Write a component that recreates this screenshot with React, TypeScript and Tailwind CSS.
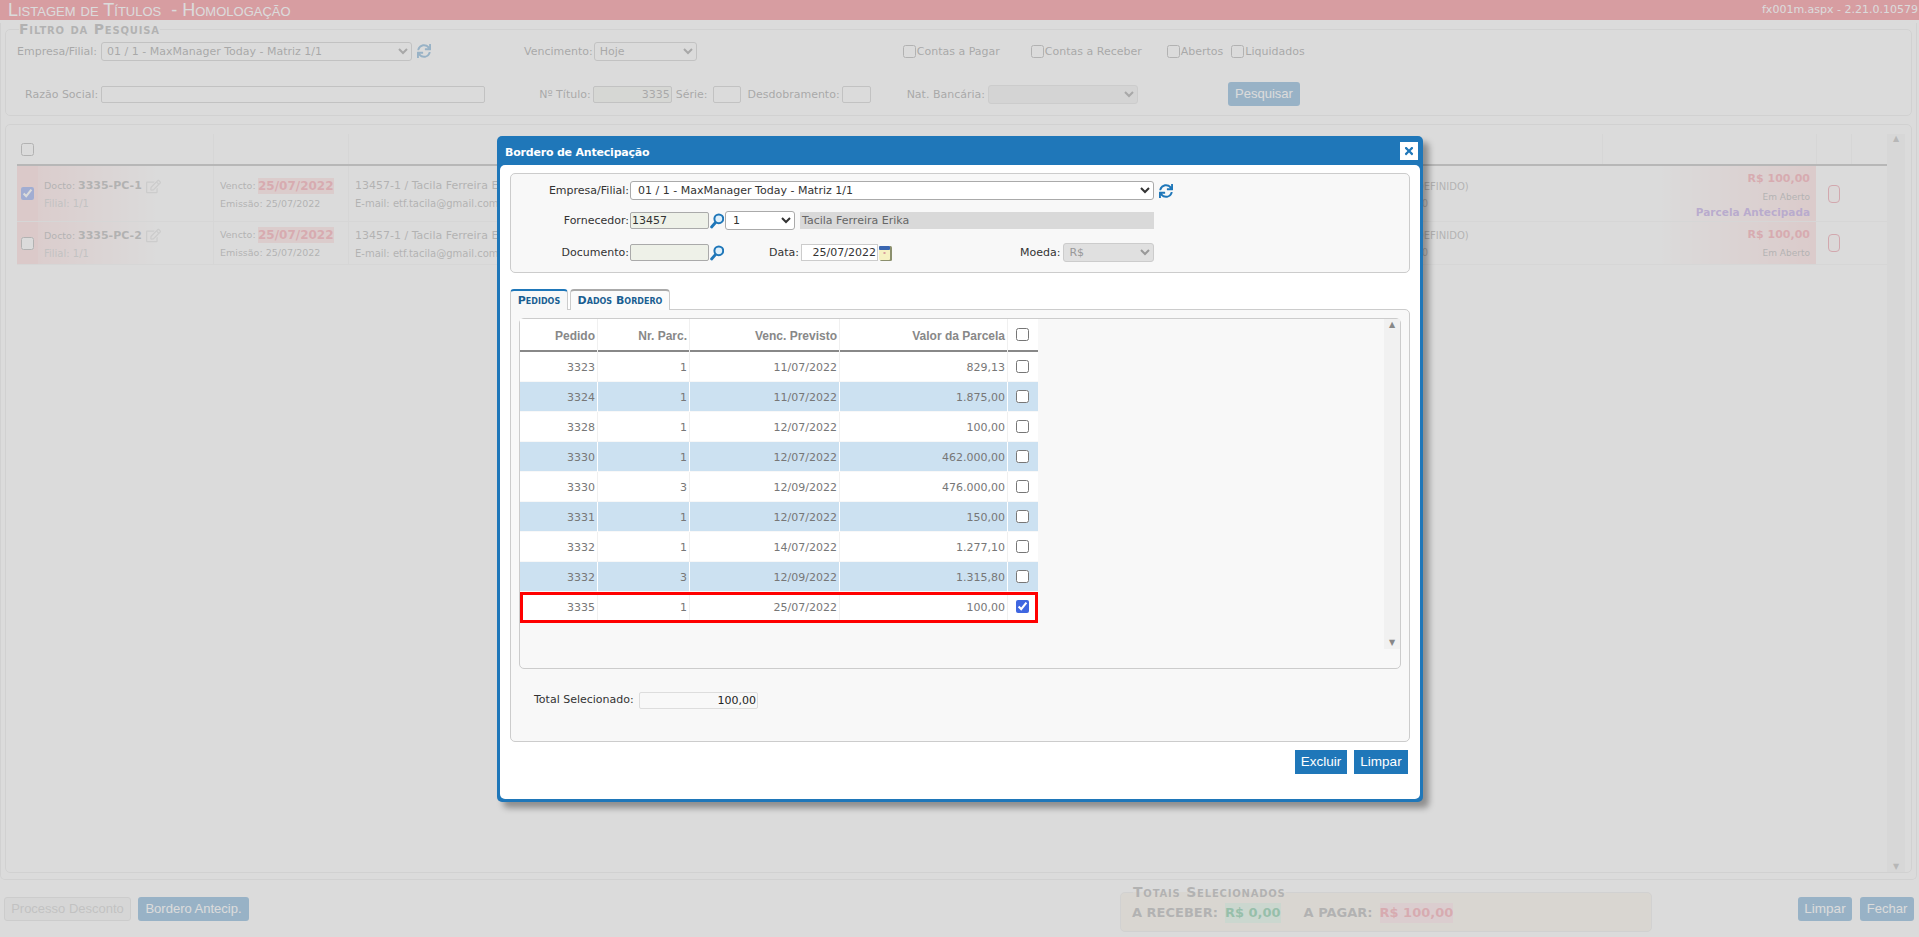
import React from "react";
import { FaSync, FaTimes, FaRegEdit } from "react-icons/fa";

const sans = "font-['DejaVu_Sans',sans-serif]";

function Mag() {
  return (
    <svg viewBox="0 0 14 16" className="ml-px h-[16px] w-[14px] shrink-0">
      <line x1="5.5" y1="9.5" x2="1.6" y2="14" stroke="#1f77b9" strokeWidth="2.8" strokeLinecap="round" />
      <circle cx="8.8" cy="5.8" r="4.4" fill="#dff0fb" stroke="#1f77b9" strokeWidth="2" />
    </svg>
  );
}

function Cal() {
  return (
    <svg viewBox="0 0 14 16" className="h-[16px] w-[14px] shrink-0">
      <rect x="2" y="1" width="12" height="15" rx="1.5" fill="#8b8f6d" />
      <rect x="1" y="1" width="11" height="14" rx="1" fill="#f6f1c2" />
      <rect x="1" y="1" width="11" height="4" rx="1" fill="#3a66b0" />
      <rect x="5.5" y="7" width="2" height="2" fill="#d9a0a0" />
    </svg>
  );
}

const lbl = "text-[#555] leading-none whitespace-nowrap";

function Filter() {
  return (
    <fieldset className="mx-px mt-[3px] h-[93px] rounded-[5px] border border-[#ddd]">
      <legend className="ml-[13px] text-[14px] font-bold leading-[13px] tracking-[0.8px] text-[#777] [font-variant:small-caps]">
        Filtro da Pesquisa
      </legend>
      <div className="flex h-[24px] items-center pl-[11px] pt-[6px]">
        <span className={lbl}>Empresa/Filial:</span>
        <select defaultValue="a" className="ml-[4px] h-[19px] w-[311px] rounded-[3px] border border-[#aaa] bg-white pl-[1px] text-[11px] text-[#555]">
          <option value="a">01 / 1 - MaxManager Today - Matriz 1/1</option>
        </select>
        <FaSync className="ml-[5px] text-[14px] text-[#1f77b9]" />
        <span className={`${lbl} ml-[93px]`}>Vencimento:</span>
        <select defaultValue="a" className="ml-[1px] h-[19px] w-[103px] rounded-[3px] border border-[#aaa] bg-white pl-[1px] text-[11px] text-[#555]">
          <option value="a">Hoje</option>
        </select>
        <label className={`${lbl} ml-[206px] flex items-center`}>
          <input type="checkbox" className="m-0 mr-px h-[13px] w-[13px]" />Contas a Pagar
        </label>
        <label className={`${lbl} ml-[31px] flex items-center`}>
          <input type="checkbox" className="m-0 mr-px h-[13px] w-[13px]" />Contas a Receber
        </label>
        <label className={`${lbl} ml-[25px] flex items-center`}>
          <input type="checkbox" className="m-0 mr-px h-[13px] w-[13px]" />Abertos
        </label>
        <label className={`${lbl} ml-[8px] flex items-center`}>
          <input type="checkbox" className="m-0 mr-px h-[13px] w-[13px]" />Liquidados
        </label>
      </div>
      <div className="mt-[22px] flex h-[24px] items-center pl-[19px]">
        <span className={lbl}>Razão Social:</span>
        <div className="ml-[3px] h-[17px] w-[384px] rounded-[2px] border border-[#aaa] bg-white" />
        <span className={`${lbl} ml-[54px]`}>Nº Título:</span>
        <div className="ml-[2px] h-[17px] w-[79px] rounded-[2px] border border-[#aaa] bg-[#eef1e8] pr-[1px] text-right leading-[15px] text-[#555]">3335</div>
        <span className={`${lbl} ml-[4px]`}>Série:</span>
        <div className="ml-[6px] h-[17px] w-[28px] rounded-[2px] border border-[#aaa] bg-white" />
        <span className={`${lbl} ml-[6px]`}>Desdobramento:</span>
        <div className="ml-[2px] h-[17px] w-[29px] rounded-[2px] border border-[#aaa] bg-white" />
        <span className={`${lbl} ml-[36px]`}>Nat. Bancária:</span>
        <select disabled className="ml-[3px] h-[19px] w-[150px] rounded-[3px] border border-[#ccc] bg-[#e6e6e6] text-[11px]" />
        <button className="ml-[90px] h-[24px] w-[72px] rounded-[3px] bg-[#1f77b9] font-['Liberation_Sans',sans-serif] text-[13px] text-white">Pesquisar</button>
      </div>
    </fieldset>
  );
}

function Row({ h, code, money, extra }: { h: string; code: string; money: string; extra?: boolean }) {
  return (
    <div className={`grid ${h} grid-cols-[21px_175px_135px_1254px_214px_35px_36px] border-b border-[#eee] text-[#777]`}>
      <div className="flex items-center justify-center bg-[#ffc4c4]">
        <input type="checkbox" defaultChecked={extra} className="m-0 h-[13px] w-[13px] accent-[#3f66e0]" />
      </div>
      <div className="flex flex-col justify-center bg-linear-to-r from-[#ffd0d0] to-white to-70% pl-[6px] pt-[2px]">
        <div className="flex items-center leading-[16px]">
          <span className="w-[34px] text-[9.5px]">Docto:</span>
          <span className="text-[11px] font-bold">{code}</span>
          <FaRegEdit className="ml-[4px] text-[15px] text-[#ccc]" />
        </div>
        <div className="mt-[2px] text-[10px] text-[#aaa]">Filial: 1/1</div>
      </div>
      <div className="flex flex-col justify-center border-l border-[#eee] pl-[6px] pt-[2px]">
        <div className="flex items-center leading-[16px]">
          <span className="w-[38px] text-[9.5px]">Vencto:</span>
          <span className="bg-[#ffcccc] text-[12px] font-bold text-[#f06070]">25/07/2022</span>
        </div>
        <div className="mt-[3px] text-[9.5px]">Emissão: 25/07/2022</div>
      </div>
      <div className="relative flex flex-col justify-center border-l border-[#eee] pl-[6px] pt-[2px]">
        <div className="text-[11px] leading-[16px]">13457-1 / Tacila Ferreira Erika</div>
        <div className="mt-[2px] text-[10px]">E-mail: etf.tacila@gmail.com /</div>
        <div className="absolute left-[1038px] top-[calc(50%-15px)] text-[10px] leading-[16px]">(NÃO DEFINIDO)</div>
        <div className="absolute left-[1060px] top-[calc(50%+3px)] text-[10px] leading-[14px]">000</div>
      </div>
      <div className="flex flex-col justify-center bg-linear-to-r from-white from-25% to-[#ffc8c8] pr-[6px] pt-[1px] text-right">
        <div className="text-[11px] font-bold leading-[18px] text-[#f06070]">{money}</div>
        <div className="text-[9px] leading-[18px]">Em Aberto</div>
        {extra && <div className="text-[10.5px] font-bold leading-[12px] text-[#8c5fd0]">Parcela Antecipada</div>}
      </div>
      <div className="flex items-center justify-center">
        <div className="h-[18px] w-[12px] rounded-[4px] border border-[#e0556a] bg-[#fff4f4]" />
      </div>
      <div />
    </div>
  );
}

function ListPanel() {
  return (
    <div className="mx-px mt-[8px] flex h-[749px] rounded-[5px] border border-[#ddd] pl-[11px] pr-[8px] pt-[9px]">
      <div className="w-[1870px] shrink-0 font-normal">
        <div className="grid h-[32px] grid-cols-[21px_175px_135px_1254px_214px_35px_36px] border-b-2 border-[#888]">
          <div className="flex items-center justify-center">
            <input type="checkbox" className="m-0 h-[13px] w-[13px]" />
          </div>
          <div />
          <div className="border-l border-[#eee]" />
          <div className="border-l border-[#eee]" />
          <div className="border-l border-[#eee]" />
          <div className="border-l border-[#eee]" />
          <div className="border-l border-[#eee]" />
        </div>
        <Row h="h-[56px]" code="3335-PC-1" money="R$ 100,00" extra />
        <Row h="h-[43px]" code="3335-PC-2" money="R$ 100,00" />
      </div>
      <div className="flex w-[18px] shrink-0 flex-col items-center justify-between bg-[#f1f1f1] py-[1px] text-[8px] leading-none text-[#888]">
        <span>▲</span>
        <span>▼</span>
      </div>
    </div>
  );
}

function Footer() {
  return (
    <div className="flex h-[60px] font-['Liberation_Sans',sans-serif] text-[13px]">
      <button className="ml-[4px] mt-[17px] h-[24px] w-[127px] rounded-[3px] border border-[#ccc] bg-[#eee] text-[#aaa]">Processo Desconto</button>
      <button className="ml-[7px] mt-[17px] h-[24px] w-[111px] rounded-[3px] bg-[#1f77b9] text-white">Bordero Antecip.</button>
      <fieldset className={`${sans} ml-[871px] mt-[6px] h-[46px] w-[532px] rounded-[5px] border border-[#ddd] bg-[#f8efdc] pl-[11px]`}>
        <legend className="ml-[1px] text-[14px] font-bold leading-[13px] tracking-[0.8px] text-[#777] [font-variant:small-caps]">Totais Selecionados</legend>
        <div className="mt-[4px] flex items-center text-[13px] font-bold text-[#777]">
          <span>A RECEBER:</span>
          <span className="ml-[7px] bg-[#c8f0d8] text-[#19a05a]">R$ 0,00</span>
          <span className="ml-[23px]">A PAGAR:</span>
          <span className="ml-[7px] bg-[#ffd0d8] text-[#f06070]">R$ 100,00</span>
        </div>
      </fieldset>
      <button className="ml-[146px] mt-[17px] h-[24px] w-[54px] rounded-[3px] bg-[#1f77b9] text-[13.5px] text-white">Limpar</button>
      <button className="ml-[8px] mt-[17px] h-[24px] w-[54px] rounded-[3px] bg-[#1f77b9] text-white">Fechar</button>
    </div>
  );
}

const rows = [
  ["3323", "1", "11/07/2022", "829,13"],
  ["3324", "1", "11/07/2022", "1.875,00"],
  ["3328", "1", "12/07/2022", "100,00"],
  ["3330", "1", "12/07/2022", "462.000,00"],
  ["3330", "3", "12/09/2022", "476.000,00"],
  ["3331", "1", "12/07/2022", "150,00"],
  ["3332", "1", "14/07/2022", "1.277,10"],
  ["3332", "3", "12/09/2022", "1.315,80"],
  ["3335", "1", "25/07/2022", "100,00"],
];

const gridCols = "grid grid-cols-[78px_92px_150px_168px_30px]";

function OrderGrid() {
  return (
    <div className="mx-[8px] mt-[8px] flex h-[351px] rounded-[5px] border border-[#ccc]">
      <div className="w-[518px] shrink-0">
        <div className={`${gridCols} h-[33px] border-b-2 border-[#888] bg-white font-['Liberation_Sans',sans-serif] text-[12px] font-bold leading-[35px] text-[#888]`}>
          {["Pedido", "Nr. Parc.", "Venc. Previsto", "Valor da Parcela"].map((t) => (
            <div key={t} className="border-r border-[#f0f0f0] pr-[2px] text-right">{t}</div>
          ))}
          <div className="flex justify-center pr-[2px] pt-[9px]">
            <input type="checkbox" className="m-0 h-[13px] w-[13px]" />
          </div>
        </div>
        {rows.map((r, i) => {
          const selected = i === 8;
          return (
            <div
              key={i}
              className={`${gridCols} mb-px text-[#777] ${selected ? "h-[31px]" : "h-[29px]"} ${i % 2 === 1 ? "bg-[#cce1f1]" : "bg-white"} ${selected ? "outline-[3px] outline-offset-[-3px] outline-[#ff0000]" : ""}`}
            >
              {r.map((c, j) => (
                <div key={j} className={`border-r pr-[2px] text-right leading-[31px] ${i % 2 === 1 ? "border-white" : "border-[#f0f0f0]"}`}>{c}</div>
              ))}
              <div className={`flex items-center justify-center pr-[2px] ${selected ? "pb-[3px]" : "pb-[2px]"}`}>
                <input type="checkbox" defaultChecked={selected} className="m-0 h-[13px] w-[13px] accent-[#3f66e0]" />
              </div>
            </div>
          );
        })}
      </div>
      <div className="flex-1" />
      <div className="flex h-[330px] w-[16px] flex-col items-center justify-between bg-[#f1f1f1] py-[2px] text-[8px] leading-none text-[#888]">
        <span>▲</span>
        <span>▼</span>
      </div>
    </div>
  );
}

function Modal() {
  return (
    <div className={`absolute left-[497px] top-[136px] flex h-[666px] w-[926px] flex-col rounded-[5px] bg-[#1f77b9] px-[3px] pb-[3px] text-[11px] shadow-[6px_6px_6px_rgba(0,0,0,0.35)] ${sans}`}>
      <div className="flex h-[29px] shrink-0 items-center justify-between pl-[5px] pr-[2px]">
        <span className="mt-[5px] font-bold tracking-[-0.2px] text-white">Bordero de Antecipação</span>
        <div className="flex h-[18px] w-[18px] items-center justify-center bg-white">
          <FaTimes className="text-[12px] text-[#1f77b9]" />
        </div>
      </div>
      <div className="flex-1 rounded-[5px] bg-white px-[10px] pt-[8px] text-[#333]">
        <div className="h-[100px] rounded-[5px] border border-[#ccc] bg-[#f8f8f8] pt-[7px]">
          <div className="flex h-[19px] items-center">
            <span className="w-[118px] pt-[2px] text-right">Empresa/Filial:</span>
            <select defaultValue="a" className="ml-[1px] h-[19px] w-[524px] rounded-[3px] border border-[#aaa] bg-white pl-[3px] text-[11px]">
              <option value="a">01 / 1 - MaxManager Today - Matriz 1/1</option>
            </select>
            <FaSync className="ml-[5px] text-[14px] text-[#1f77b9]" />
          </div>
          <div className="mt-[11px] flex h-[19px] items-center">
            <span className="w-[118px] pt-[2px] text-right">Fornecedor:</span>
            <div className="ml-[1px] h-[17px] w-[79px] rounded-[2px] border border-[#aaa] bg-[#eef1e8] pl-[1px] leading-[15px]">13457</div>
            <Mag />
            <select defaultValue="a" className="ml-[1px] h-[19px] w-[70px] rounded-[3px] border border-[#aaa] bg-white pl-[3px] text-[11px]">
              <option value="a">1</option>
            </select>
            <div className="ml-[5px] h-[17px] w-[354px] bg-[#d9d9d9] pl-[2px] leading-[17px] text-[#666]">Tacila Ferreira Erika</div>
          </div>
          <div className="mt-[13px] flex h-[19px] items-center">
            <span className="w-[118px] pt-[2px] text-right">Documento:</span>
            <div className="ml-[1px] h-[17px] w-[79px] rounded-[2px] border border-[#aaa] bg-[#eef1e8]" />
            <Mag />
            <span className="ml-[45px] pt-[2px]">Data:</span>
            <div className="ml-[2px] h-[17px] w-[77px] border border-[#ccc] bg-white pr-[1px] text-right leading-[15px]">25/07/2022</div>
            <Cal />
            <span className="ml-[128px] pt-[2px]">Moeda:</span>
            <select disabled className="ml-[3px] h-[19px] w-[91px] rounded-[3px] border border-[#ccc] bg-[#e0e0e0] pl-[1px] text-[11px] text-[#999]">
              <option>R$</option>
            </select>
          </div>
        </div>
        <div className="mt-[16px] flex h-[21px] items-end">
          <div className="h-[21px] w-[58px] rounded-t-[4px] border-x border-t-2 border-x-[#ccc] border-t-[#1f77b9] bg-[#f8f8f8] text-center text-[11px] font-bold leading-[19px] text-[#1a5f92] [font-variant:small-caps]">Pedidos</div>
          <div className="ml-[2px] h-[21px] w-[100px] rounded-t-[4px] border-x border-t-2 border-x-[#ccc] border-t-[#aaa] bg-[#fbfbfb] text-center text-[11px] font-bold leading-[19px] text-[#1a5f92] [font-variant:small-caps]">Dados Bordero</div>
        </div>
        <div className="-mt-px h-[433px] rounded-b-[5px] rounded-tr-[5px] border border-[#ccc] bg-[#f8f8f8]">
          <OrderGrid />
          <div className="ml-[23px] mt-[23px] flex items-center">
            <span className="w-[105px]">Total Selecionado:</span>
            <div className="h-[17px] w-[119px] rounded-[2px] border border-[#ddd] pr-[1px] text-right leading-[15px] text-[#222]">100,00</div>
          </div>
        </div>
        <div className="mt-[8px] flex justify-end pr-[2px] font-['Liberation_Sans',sans-serif] text-[13.5px] text-white">
          <button className="h-[24px] w-[52px] bg-[#1f77b9]">Excluir</button>
          <button className="ml-[7px] h-[24px] w-[54px] bg-[#1f77b9]">Limpar</button>
        </div>
      </div>
    </div>
  );
}

export default function App() {
  return (
    <div className={`relative h-[937px] w-full overflow-hidden bg-white text-[11px] text-[#555] ${sans}`}>
      <div className="flex h-[20px] items-center justify-between bg-[#f02f3f] pl-[8px] pr-px text-white">
        <span className="whitespace-pre font-['Liberation_Sans',sans-serif] text-[18px] leading-none [font-variant:small-caps]">Listagem de Títulos  - Homologação</span>
        <span>fx001m.aspx - 2.21.0.10579</span>
      </div>
      <div className="mr-[2px] h-[857px] rounded-b-[5px] border border-t-0 border-[#ddd] px-[3px]">
        <Filter />
        <ListPanel />
      </div>
      <Footer />
      <div className="absolute inset-0 bg-[#cccccc] opacity-70" />
      <Modal />
    </div>
  );
}
